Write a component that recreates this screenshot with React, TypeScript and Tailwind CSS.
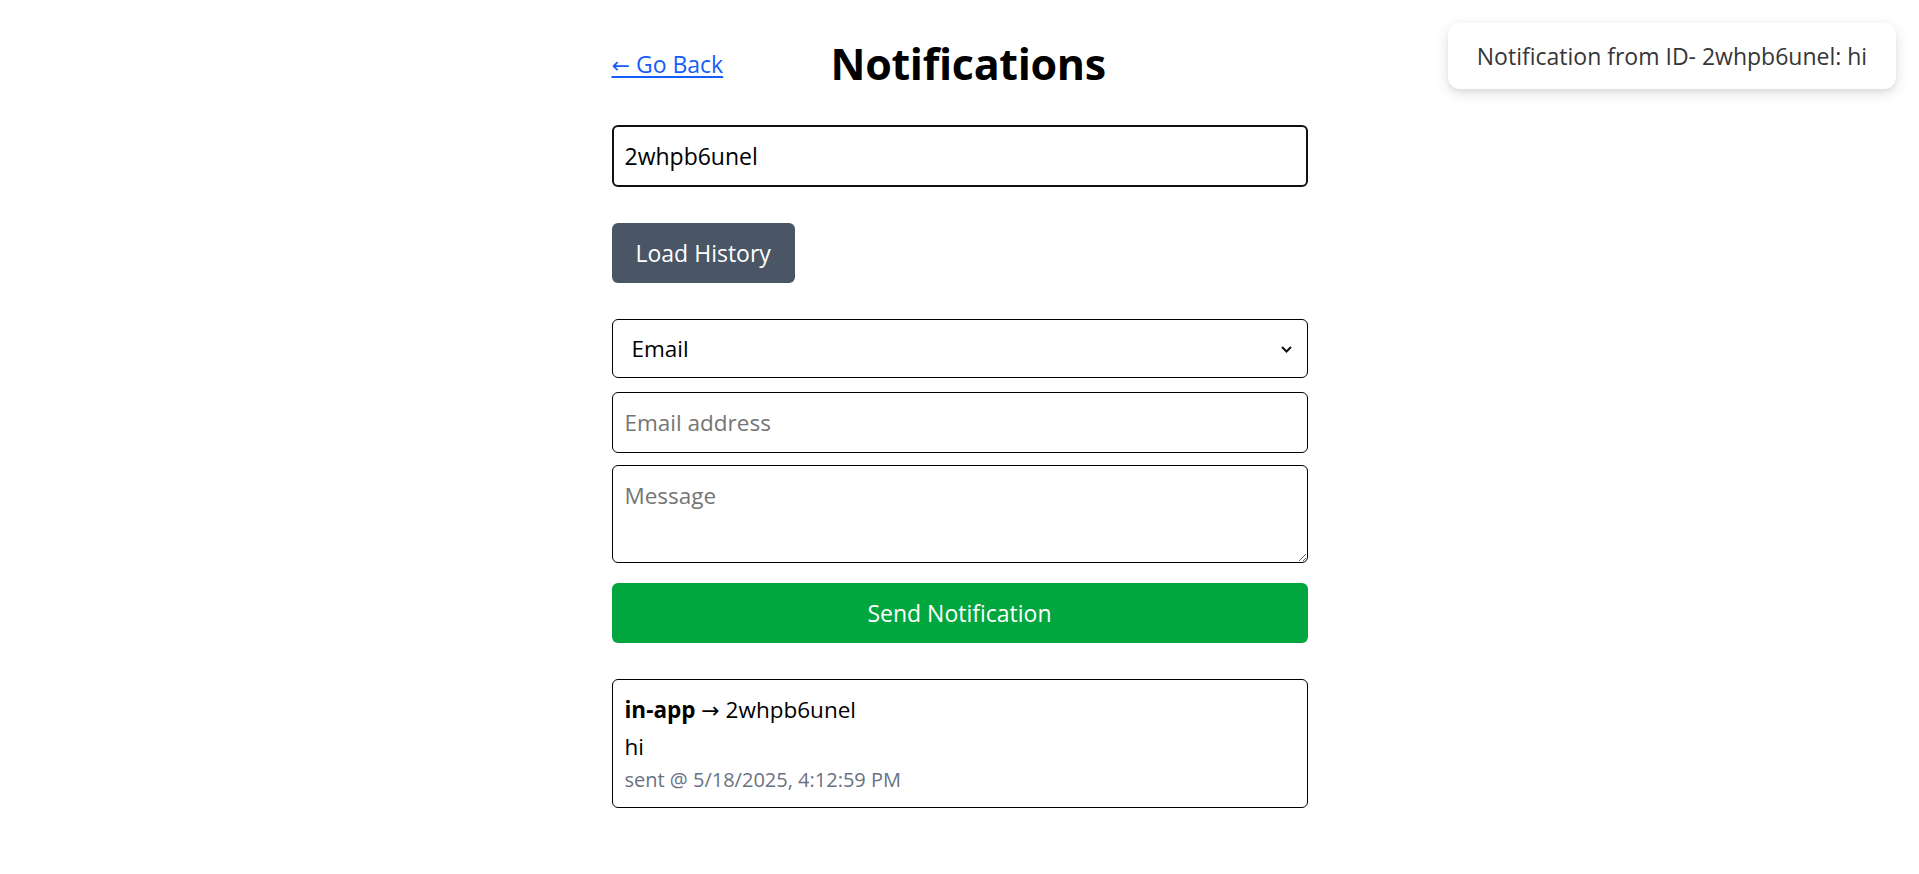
export default function App() {
  return (
    <div className="relative min-h-screen bg-white font-['Open_Sans',sans-serif] text-black">
      <div className="mx-auto w-[696px] pt-[37px]">
        <div className="flex h-[54px] items-center">
          <div className="w-[114px]">
            <a href="#" className="text-[23px] text-[#155dfc] underline underline-offset-[3px]">
              <span className="font-['DejaVu_Sans'] text-[22px]">←</span> Go Back
            </a>
          </div>
          <h1 className="ml-[105px] text-[43px] font-bold leading-[54px] tracking-[-0.3px]">
            Notifications
          </h1>
        </div>

        <input
          className="mt-[34px] block h-[62px] w-full rounded-[6px] border-2 border-[#111] px-[11px] text-[23px] outline-none"
          defaultValue="2whpb6unel"
        />

        <button className="mt-[36px] h-[60px] rounded-[6px] bg-[#4a5565] px-[24px] text-[23px] text-white">
          Load History
        </button>

        <div className="relative mt-[36px]">
          <select className="block h-[59px] w-full appearance-none rounded-[6px] border border-black bg-white px-[19px] text-[22.5px] outline-none">
            <option>Email</option>
            <option>SMS</option>
            <option>In-App</option>
          </select>
          <svg
            className="pointer-events-none absolute right-[16px] top-[25px] h-[10px] w-[11px]"
            viewBox="0 0 11 10"
            fill="none"
            stroke="#111"
            strokeWidth="2"
          >
            <path d="M1 3l4.5 4.5L10 3" />
          </svg>
        </div>

        <input
          className="mt-[14px] block h-[61px] w-full rounded-[6px] border border-black px-[12px] text-[22.5px] outline-none placeholder:text-[#757575]"
          placeholder="Email address"
        />

        <textarea
          className="mt-[12px] block h-[98px] w-full rounded-[6px] border border-black px-[12px] py-[12px] text-[22.5px] leading-[36px] outline-none placeholder:text-[#757575]"
          placeholder="Message"
        />

        <button className="mt-[20px] block h-[60px] w-full rounded-[6px] bg-[#00a63e] text-[23px] text-white">
          Send Notification
        </button>

        <div className="mt-[36px] rounded-[6px] border border-black p-[12px]">
          <div className="text-[22.5px] leading-[36px]">
            <span className="font-bold">in-app</span>{" "}
            <span className="font-['DejaVu_Sans'] text-[22px]">→</span> 2whpb6unel
          </div>
          <div className="text-[22.5px] leading-[36px]">hi</div>
          <div className="text-[20px] leading-[30px] text-[#6a7282]">sent @ 5/18/2025, 4:12:59 PM</div>
        </div>
      </div>

      <div className="absolute right-[23px] top-[23px] flex h-[66px] w-[448px] items-center justify-center rounded-[12px] bg-white text-[23px] text-[#363636] shadow-[0_4px_14px_rgba(0,0,0,0.12),0_3px_4px_rgba(0,0,0,0.05)]">
        Notification from ID- 2whpb6unel: hi
      </div>
    </div>
  );
}
